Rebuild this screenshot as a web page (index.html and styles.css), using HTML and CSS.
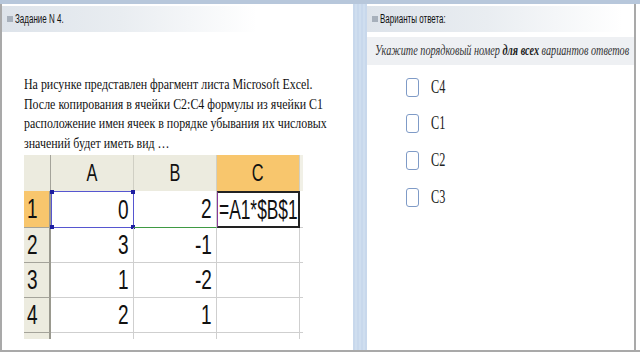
FILE: index.html
```html
<!DOCTYPE html>
<html lang="ru">
<head>
    <meta charset="UTF-8">
    <title>Задание N 4</title>
    <link rel="stylesheet" href="styles.css">
</head>
<body>
    <div class="topbar"></div>
    <div class="main">
        <section class="task">
            <div class="head"><i class="mark"></i><span class="sq">Задание N 4.</span></div>
            <div class="question">На рисунке представлен фрагмент листа Microsoft Excel.<br>После копирования в ячейки С2:С4 формулы из ячейки С1<br>расположение имен ячеек в порядке убывания их числовых<br>значений будет иметь вид …</div>
            <div class="sheet">
                <div class="hdr corner"></div>
                <div class="hdr col">
                    <span class="sq c">A</span>
                </div>
                <div class="hdr col">
                    <span class="sq c">B</span>
                </div>
                <div class="hdr col active">
                    <span class="sq c">C</span>
                </div>
                <div class="hdr edge"></div>

                <div class="hdr row active"><span class="sq">1</span></div>
                <div class="cell a1"><span class="sq r">0</span><i class="dot tl"></i><i class="dot tr"></i><i class="dot bl"></i><i class="dot br"></i></div>
                <div class="cell b1"><span class="sq r">2</span></div>
                <div class="cell c1"><span class="sq f">=A1*$B$1</span></div>
                <div class="cell edge"></div>

                <div class="hdr row"><span class="sq">2</span></div>
                <div class="cell"><span class="sq r">3</span></div>
                <div class="cell"><span class="sq r">-1</span></div>
                <div class="cell"></div>
                <div class="cell edge"></div>

                <div class="hdr row"><span class="sq">3</span></div>
                <div class="cell"><span class="sq r">1</span></div>
                <div class="cell"><span class="sq r">-2</span></div>
                <div class="cell"></div>
                <div class="cell edge"></div>

                <div class="hdr row"><span class="sq">4</span></div>
                <div class="cell"><span class="sq r">2</span></div>
                <div class="cell"><span class="sq r">1</span></div>
                <div class="cell"></div>
                <div class="cell edge"></div>

                <div class="hdr stub"></div>
                <div class="cell stub"></div>
                <div class="cell stub"></div>
                <div class="cell stub"></div>
                <div class="cell stub edge"></div>
            </div>
        </section>
        <div class="gutter"></div>
        <section class="answers">
            <div class="head"><i class="mark"></i><span class="sq">Варианты ответа:</span></div>
            <div class="hint"><span class="sq">Укажите порядковый номер <b>для всех</b> вариантов ответов</span></div>
            <ul class="options">
                <li><span class="box"></span><span class="sq">С4</span></li>
                <li><span class="box"></span><span class="sq">С1</span></li>
                <li><span class="box"></span><span class="sq">С2</span></li>
                <li><span class="box"></span><span class="sq">С3</span></li>
            </ul>
        </section>
    </div>
    <div class="bottom"></div>
</body>
</html>
```

FILE: styles.css
```css
body {
    margin: 0;
    width: 640px;
    height: 354px;
    overflow: hidden;
    background: #fff;
    font-family: "Liberation Sans", Arial, sans-serif;
    color: #111;
}

/* the source picture is squeezed sideways, so is the text */
.sq {
    display: inline-block;
    white-space: nowrap;
    transform: scaleX(.68);
    transform-origin: left center;
}

.topbar {
    height: 4px;
    background: #b7c7db;
}

.main {
    display: flex;
    height: 346px;
}

.task {
    width: 351px;
    border-left: 2px solid #a9a9a9;
    background: #fff;
}

.gutter {
    width: 14px;
    background: repeating-linear-gradient(90deg, #c8d8ec 0, #c8d8ec 2px, #cfdeef 2px, #cfdeef 4px);
}

.answers {
    width: 267px;
    border-right: 2px solid #a9a9a9;
}

.bottom {
    height: 2px;
    background: #a9a9a9;
}

.head {
    margin-top: 2px;
    height: 26px;
    display: flex;
    align-items: center;
    font-size: 12.5px;
    color: #111;
    background: linear-gradient(90deg, #dde3ea 0, #e9edf1 120px, #ffffff 255px);
}

.head .sq {
    transform: scaleX(.64);
}

.mark {
    width: 6px;
    height: 6px;
    background: #a7b0bb;
    margin: 0 2px 0 5px;
}

.question {
    margin: 43px 0 0 22px;
    font-family: "Liberation Serif", "Times New Roman", serif;
    font-size: 15px;
    line-height: 19.5px;
    white-space: nowrap;
    transform: scaleX(.795);
    transform-origin: left top;
    color: #111;
}

/* spreadsheet fragment */
.sheet {
    margin: 2px 0 0 22px;
    display: grid;
    grid-template-columns: 27px 83px 83px 83px 3px;
    grid-template-rows: 36px 37px 35px 35px 35px 6px;
    width: 279px;
}

.hdr {
    background: #ecebdf;
    border-right: 1px solid #a4a39a;
    border-bottom: 1px solid #a4a39a;
    display: flex;
    align-items: center;
    font-size: 28px;
}

.hdr.col {
    justify-content: center;
    font-size: 24px;
    border-right-color: #d0cfc4;
    border-bottom: none;
}

.hdr.corner {
    border-bottom: none;
}

.hdr.edge {
    border: none;
    background: #f1f0e6;
}

.hdr.row {
    padding-left: 3px;
    border-right: 2px solid #9a998f;
}

.hdr.stub {
    border-bottom: none;
    border-right: 2px solid #9a998f;
}

.hdr.active {
    background: #f8c66d;
}

.sq.c {
    transform-origin: center;
}

.sq.r {
    transform-origin: right center;
}

.sq.f {
    transform: scaleX(.62);
}

.cell {
    position: relative;
    border-right: 1px solid #cfcfcf;
    border-bottom: 1px solid #cfcfcf;
    display: flex;
    align-items: center;
    justify-content: flex-end;
    padding-right: 4px;
    font-size: 28px;
}

.cell.edge {
    border-right: none;
    padding: 0;
}

.cell.stub {
    border-bottom: none;
}

.a1 {
    border: 1px solid #5656d0;
}

.b1 {
    border-bottom: 1px solid #3f9a43;
}

.c1 {
    justify-content: flex-start;
    padding: 0 0 0 1px;
    border: 2px solid #222;
    border-left: 1px solid #8a3a9a;
}

.dot {
    position: absolute;
    width: 4px;
    height: 4px;
    background: #1e1ea0;
}

.dot.tl { left: -2px; top: -2px; }
.dot.tr { right: -2px; top: -2px; }
.dot.bl { left: -2px; bottom: -2px; }
.dot.br { right: -2px; bottom: -2px; }

/* answers */
.hint {
    margin-top: 5px;
    height: 28px;
    display: flex;
    align-items: center;
    padding-left: 8px;
    background: #eef0f3;
    font-family: "Liberation Serif", "Times New Roman", serif;
    font-style: italic;
    font-size: 14px;
    color: #333;
}

.hint .sq {
    transform: scaleX(.73);
}

.hint b {
    color: #222;
}

.options {
    list-style: none;
    margin: 12px 0 0;
    padding: 0 0 0 39px;
    display: flex;
    flex-direction: column;
    gap: 16.7px;
}

.options li {
    display: flex;
    align-items: center;
    height: 20px;
    font-family: "Liberation Serif", "Times New Roman", serif;
    font-size: 18px;
    color: #222;
}

.box {
    width: 10.5px;
    height: 17px;
    border: 1.5px solid #7f9bc7;
    border-radius: 3px;
    margin-right: 12px;
}
```
